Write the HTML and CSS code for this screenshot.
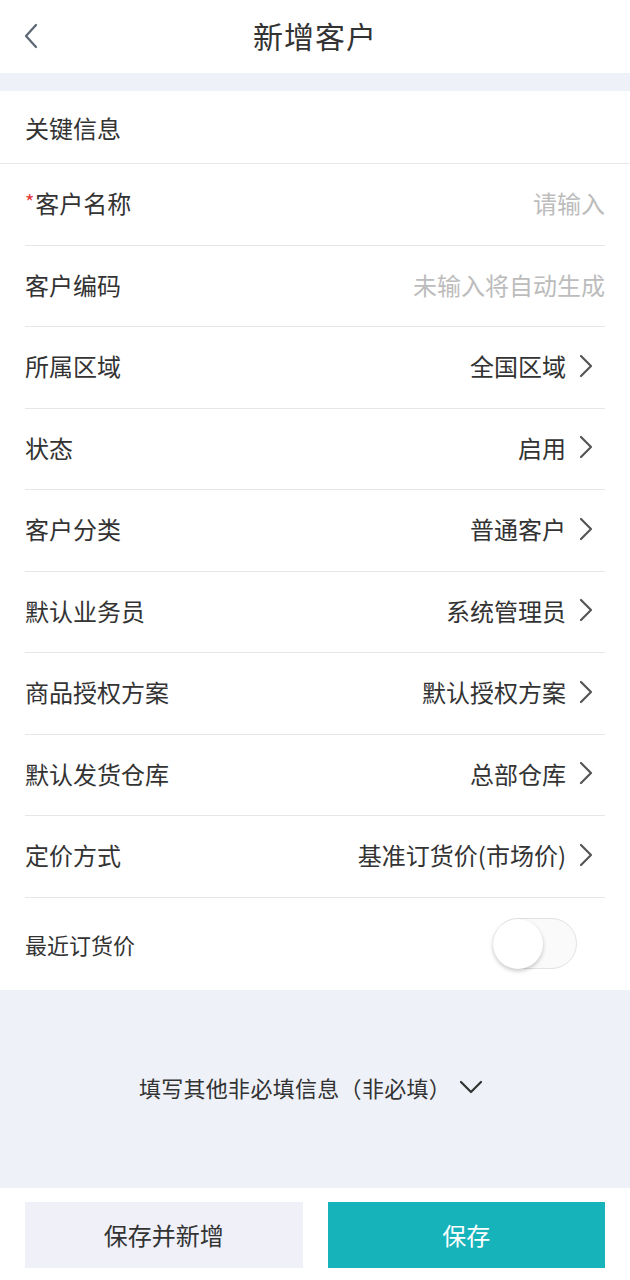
FILE: index.html
```html
<!DOCTYPE html>
<html lang="zh-CN">
<head>
<meta charset="utf-8">
<title>新增客户</title>
<link rel="stylesheet" href="styles.css">
</head>
<body>
<div class="page">
  <header class="topbar">
    <span class="back">
      <svg width="16" height="26" viewBox="0 0 16 26"><path d="M13 2 L3 13 L13 24" fill="none" stroke="#5b6573" stroke-width="2.2" stroke-linecap="round" stroke-linejoin="round"/></svg>
    </span>
    <h1 class="title">新增客户</h1>
  </header>
  <div class="band"></div>
  <section class="card">
    <div class="sec-title">关键信息</div>
    <div class="rows">
      <div class="row"><span class="label"><i class="req">*</i>客户名称</span><span class="ph">请输入</span></div>
      <div class="row"><span class="label">客户编码</span><span class="ph">未输入将自动生成</span></div>
      <div class="row"><span class="label">所属区域</span><span class="val">全国区域<svg class="chev" width="16" height="24" viewBox="0 0 16 24"><path d="M3 2 L13 12 L3 22" fill="none" stroke="#555" stroke-width="2.2" stroke-linecap="round" stroke-linejoin="round"/></svg></span></div>
      <div class="row"><span class="label">状态</span><span class="val">启用<svg class="chev" width="16" height="24" viewBox="0 0 16 24"><path d="M3 2 L13 12 L3 22" fill="none" stroke="#555" stroke-width="2.2" stroke-linecap="round" stroke-linejoin="round"/></svg></span></div>
      <div class="row"><span class="label">客户分类</span><span class="val">普通客户<svg class="chev" width="16" height="24" viewBox="0 0 16 24"><path d="M3 2 L13 12 L3 22" fill="none" stroke="#555" stroke-width="2.2" stroke-linecap="round" stroke-linejoin="round"/></svg></span></div>
      <div class="row"><span class="label">默认业务员</span><span class="val">系统管理员<svg class="chev" width="16" height="24" viewBox="0 0 16 24"><path d="M3 2 L13 12 L3 22" fill="none" stroke="#555" stroke-width="2.2" stroke-linecap="round" stroke-linejoin="round"/></svg></span></div>
      <div class="row"><span class="label">商品授权方案</span><span class="val">默认授权方案<svg class="chev" width="16" height="24" viewBox="0 0 16 24"><path d="M3 2 L13 12 L3 22" fill="none" stroke="#555" stroke-width="2.2" stroke-linecap="round" stroke-linejoin="round"/></svg></span></div>
      <div class="row"><span class="label">默认发货仓库</span><span class="val">总部仓库<svg class="chev" width="16" height="24" viewBox="0 0 16 24"><path d="M3 2 L13 12 L3 22" fill="none" stroke="#555" stroke-width="2.2" stroke-linecap="round" stroke-linejoin="round"/></svg></span></div>
      <div class="row"><span class="label">定价方式</span><span class="val">基准订货价(市场价)<svg class="chev" width="16" height="24" viewBox="0 0 16 24"><path d="M3 2 L13 12 L3 22" fill="none" stroke="#555" stroke-width="2.2" stroke-linecap="round" stroke-linejoin="round"/></svg></span></div>
      <div class="row row-last"><span class="label small">最近订货价</span><span class="toggle"><span class="knob"></span></span></div>
    </div>
  </section>
  <div class="more">
    <span>填写其他非必填信息（非必填）</span>
    <svg width="24" height="14" viewBox="0 0 24 14"><path d="M2 2 L12 12 L22 2" fill="none" stroke="#333" stroke-width="2.2" stroke-linecap="round" stroke-linejoin="round"/></svg>
  </div>
  <footer class="actions">
    <button class="btn btn-sub">保存并新增</button>
    <button class="btn btn-main">保存</button>
  </footer>
</div>
</body>
</html>
```

FILE: styles.css
```css
* { box-sizing: border-box; margin: 0; padding: 0; }
html, body { background: #fff; }
body {
  font-family: "Noto Sans CJK SC", "Noto Sans", "Liberation Sans", sans-serif;
  color: #333;
  width: 630px;
}
.page { display: flex; flex-direction: column; min-height: 1280px; }
.topbar {
  height: 73px;
  display: flex;
  align-items: center;
  justify-content: center;
  position: relative;
  background: #fff;
}
.back { position: absolute; left: 23px; top: 23px; display: flex; }
.title { font-size: 30px; font-weight: 400; color: #333; letter-spacing: 1px; margin-top: -3px; }
.band { height: 18px; background: #eef1f8; }
.card { background: #fff; }
.sec-title {
  height: 73px;
  display: flex;
  align-items: center;
  padding-left: 25px;
  font-size: 24px;
  border-bottom: 1px solid #e8e8e8;
}
.rows { padding: 0 25px; }
.row {
  height: 81.5px;
  display: flex;
  align-items: center;
  justify-content: space-between;
  border-bottom: 1px solid #e6e6e6;
  font-size: 24px;
  padding-bottom: 3px;
}
.row-last { height: 92px; border-bottom: none; padding-bottom: 0; }
.label { color: #333; display: flex; align-items: center; }
.label.small { font-size: 22px; }
.req { font-style: normal; color: #e4393c; font-size: 20px; margin-right: 1px; position: relative; top: -1px; }
.ph { color: #bcbcbc; }
.val { color: #333; display: flex; align-items: center; }
.chev { margin-left: 12px; margin-right: 11px; }
.toggle {
  width: 84px;
  height: 51px;
  border-radius: 26px;
  background: #fafafa;
  border: 1px solid #e2e2e2;
  margin-right: 28px;
  position: relative;
  display: flex;
  align-items: center;
}
.knob {
  width: 50px;
  height: 50px;
  border-radius: 50%;
  background: #fff;
  box-shadow: 0 2px 4px rgba(0,0,0,0.22);
  margin-left: -1px;
}
.more {
  height: 198px;
  background: #eef1f8;
  display: flex;
  align-items: center;
  justify-content: center;
  gap: 8px;
  font-size: 22px;
  letter-spacing: 0.3px;
  color: #333;
  padding-right: 8px;
  padding-bottom: 4px;
}
.actions {
  display: flex;
  gap: 25px;
  padding: 14px 25px 12px;
  background: #fff;
}
.btn {
  flex: 1;
  height: 66px;
  border: none;
  font-family: inherit;
  font-size: 24px;
}
.btn-sub { background: #eff0f8; color: #333; }
.btn-main { background: #16b3bb; color: #fff; }
```
